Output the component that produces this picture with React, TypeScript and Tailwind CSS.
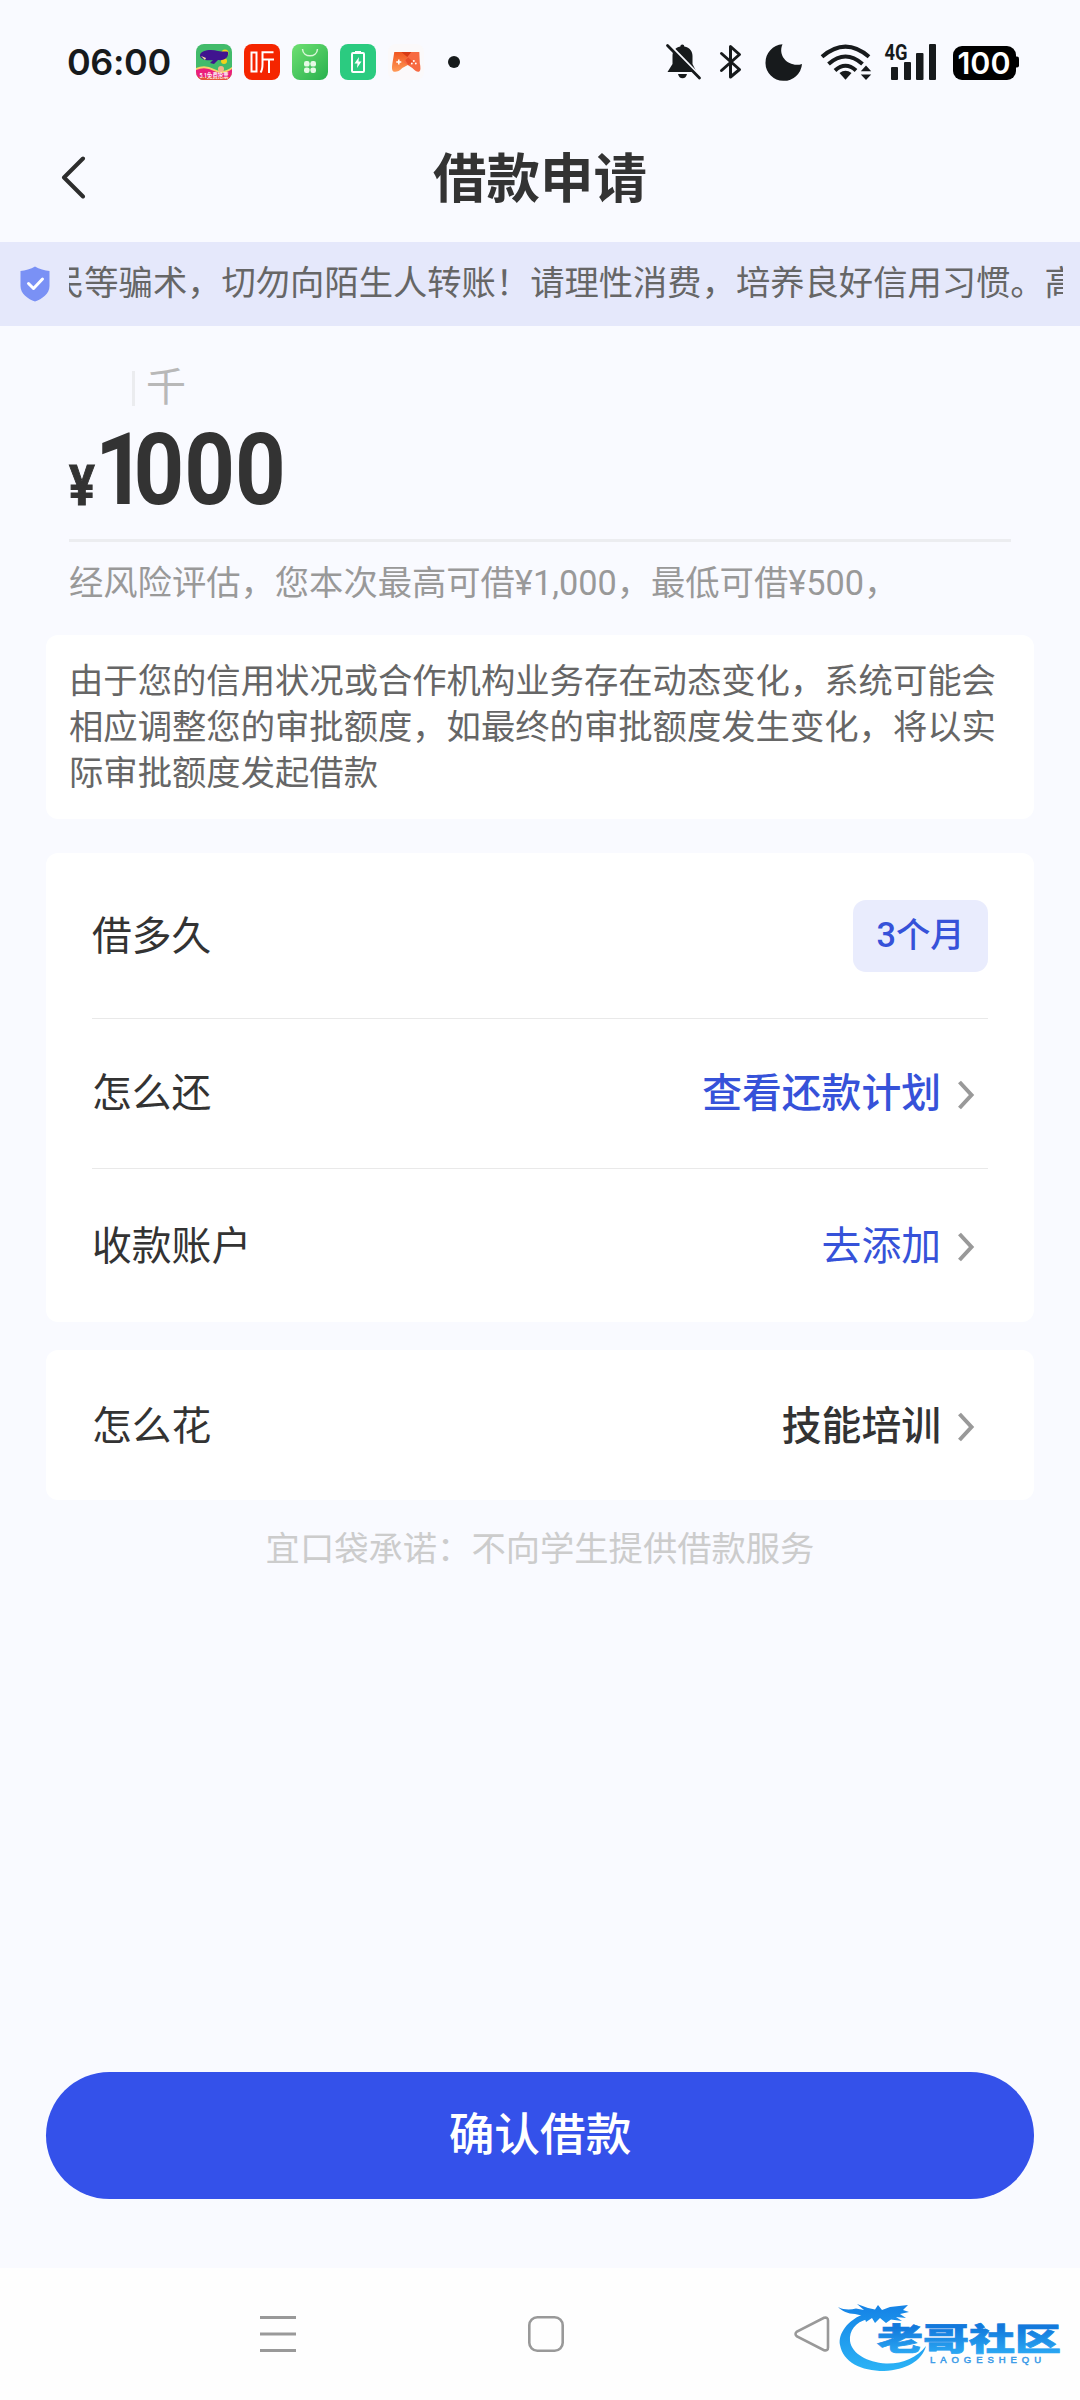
import React from 'react';

type LoanRow = {
  label: string;
  value: string;
  valueClass: string;
};

const PLAN_ROW: LoanRow = { label: '怎么还', value: '查看还款计划', valueClass: 'font-medium text-[#3652d9]' };
const ACCOUNT_ROW: LoanRow = { label: '收款账户', value: '去添加', valueClass: 'text-[#3652d9]' };
const USAGE_ROW: LoanRow = { label: '怎么花', value: '技能培训', valueClass: 'font-medium text-[#333333]' };

// --- Status bar ---
const AppIcons: React.FC = () => (
  <svg className="ml-[26px] h-9 w-[264px]" viewBox="0 0 264 36">
    <defs>
      <linearGradient id="market" x1="0" y1="0" x2="1" y2="1">
        <stop offset="0" stopColor="#6fe072" />
        <stop offset="1" stopColor="#27b04d" />
      </linearGradient>
      <linearGradient id="padLeft" x1="0" y1="0" x2="0" y2="1">
        <stop offset="0" stopColor="#f0551f" />
        <stop offset="1" stopColor="#ff9a56" />
      </linearGradient>
      <clipPath id="whaleClip">
        <rect width="36" height="36" rx="8" />
      </clipPath>
    </defs>
    <g clipPath="url(#whaleClip)">
      <rect width="36" height="36" fill="#42bb6b" />
      <path d="M0 24 Q9 20 18 25 T36 23 V36 H0Z" fill="#f7d36b" />
      <path d="M0 26 Q9 22 18 27 T36 25 V36 H0Z" fill="#ea1f7c" />
      <rect y="33" width="36" height="3" fill="#e8553a" />
      <circle cx="29" cy="9" r="3.5" fill="#f3d21b" />
      <circle cx="28" cy="17" r="3" fill="#f3d21b" />
      <circle cx="25" cy="25" r="3" fill="#f5b58a" />
      <path d="M4 11 C5 6 15 5 22 7 C27 8 31 7 32 8 C33 13 29 17 22 16 L18 20 L14 19 L17 16 C9 17 4 15 4 11Z" fill="#40148f" />
      <path d="M5 12 l5 2 -1 2Z" fill="#f6e6a0" />
      <text x="3.5" y="33.5" fontSize="7.2" fontWeight="500" fill="#fff" textLength="29" lengthAdjust="spacingAndGlyphs">5.1免费抢票</text>
    </g>
    <rect x="48" width="36" height="36" rx="8" fill="#f52500" />
    <g fill="none" stroke="#fff" strokeWidth="2">
      <path d="M55.500 8.500 H60.500 V27.500 H55.500Z" />
      <path d="M77.500 8.200 L66.500 8.200 V20 Q66.500 26 64.500 28.500" />
      <path d="M66.500 15.500 H78 M73 15.500 V29" />
    </g>
    <rect x="96" width="36" height="36" rx="8" fill="url(#market)" />
    <path d="M106.500 5 C107 14 121 14 121.500 5" fill="none" stroke="#d9f7d8" strokeWidth="1.500" />
    <g fill="#e6f9e6">
      <rect x="108" y="17" width="5.600" height="5.600" rx="2.200" />
      <rect x="114.400" y="17" width="5.600" height="5.600" rx="2.200" />
      <rect x="108" y="23.400" width="5.600" height="5.600" rx="2.200" />
      <rect x="114.400" y="23.400" width="5.600" height="5.600" rx="2.200" />
    </g>
    <rect x="144" width="36" height="36" rx="8" fill="#2bcb80" />
    <rect x="156" y="9" width="12" height="19" rx="1" fill="none" stroke="#fff" strokeWidth="2" />
    <rect x="159" y="7" width="6" height="2.500" fill="#fff" />
    <path d="M163 13 L158.500 19.500 H161.500 L161 24 L165.500 17.500 H162.500Z" fill="#fff" />
    <rect x="192" width="36" height="36" rx="8" fill="#fbf9fa" />
    <g transform="translate(1.300 0)">
      <path d="M199 8 H218 L211 15 Z" fill="#d83a14" />
      <path d="M197 8 H204 L216 18 L205 24 Q200 29 196 27.500 Q194 26 195 20Z" fill="url(#padLeft)" />
      <path d="M222 8 H214 L206 18 L215 24 Q219 28.500 222 27.500 Q224 26 222.500 19Z" fill="#f76a42" />
      <path d="M208 16 L211 13.500 L216 18 L211 21Z" fill="#e9502a" />
      <path d="M199 18 H204 M201.500 15.500 V20.500" stroke="#fff" strokeWidth="1.500" />
      <circle cx="216.500" cy="17" r="1" fill="#fff" />
      <circle cx="214.500" cy="19.500" r="0.900" fill="#fff" />
      <circle cx="218.500" cy="19.500" r="0.900" fill="#fff" />
    </g>
    <circle cx="258" cy="18" r="6" fill="#171a1c" />
  </svg>
);

const SystemIcons: React.FC = () => (
  <svg className="h-10 w-[360px] overflow-visible" viewBox="0 0 360 40" fill="#171a1c">
    {/* muted bell */}
    <path d="M20.300 4.500 a2 2 0 0 1 4 0 C30 5.500 32.500 9.500 32.500 14 V22 L36.500 30 H7.500 L12.500 22 V14 C12.500 9.500 15 5.500 20.300 4.500Z" />
    <path d="M18 32 H27 Q26 36.200 22.500 36.200 Q19 36.200 18 32Z" />
    <path d="M9.500 3 L42 36.500" stroke="#f9faff" strokeWidth="3.200" />
    <path d="M7.500 3.500 L39.500 36" stroke="#171a1c" strokeWidth="2.800" strokeLinecap="round" />
    {/* bluetooth */}
    <path d="M61.500 11.500 L79.500 27.500 L70.500 35 V4.500 L79.500 12.500 L61.500 28.500" fill="none" stroke="#171a1c" strokeWidth="3" strokeLinejoin="round" strokeLinecap="round" />
    {/* do not disturb */}
    <path d="M122.500 2.300 A18.300 18.300 0 1 0 142 22 C130 26 117 15 122.500 2.300Z" />
    {/* wifi */}
    <g fill="none" stroke="#171a1c" strokeWidth="4">
      <path d="M162 14.800 Q185.500 -5.500 209 14.800" />
      <path d="M168.500 22 Q185.500 7 202.500 22" />
      <path d="M175 28.500 Q185.500 19 196 28.500" />
    </g>
    <path d="M179.500 31 Q185.500 26.500 191.500 31 L185.500 37.800Z" />
    <path d="M206 23.500 L211.200 29.300 H200.800Z M206 38 L211.200 32.600 H200.800Z" />
    {/* signal */}
    <text x="224.500" y="17.500" fontFamily="Roboto" fontWeight="700" fontSize="21.500" textLength="23" lengthAdjust="spacingAndGlyphs">4G</text>
    <rect x="231" y="25" width="7" height="13" rx="1" />
    <rect x="244" y="20" width="7" height="18" rx="1" />
    <rect x="256" y="11" width="7.500" height="27" rx="1" />
    <rect x="269" y="2" width="7" height="36" rx="1" />
    {/* battery */}
    <rect x="293" y="4" width="63" height="34" rx="9" fill="#000" />
    <path d="M355 14.500 h2 q2 0 2 2 v7 q0 2 -2 2 h-2Z" fill="#000" />
    <text x="297.500" y="32.200" fontFamily="Inter" fontWeight="600" fontSize="30.500" fill="#fff" textLength="53" lengthAdjust="spacingAndGlyphs">100</text>
  </svg>
);

const StatusBar: React.FC = () => (
  <div className="flex h-[124px] shrink-0 items-center justify-between pl-[67px] pr-[60px]">
    <div className="flex items-center">
      <span className="w-[103px] whitespace-nowrap font-[Inter] text-[36px] font-semibold tracking-[-0.4px] text-[#171a1c]">06:00</span>
      <AppIcons />
    </div>
    <SystemIcons />
  </div>
);

// --- Shared pieces ---
const Chevron: React.FC = () => (
  <svg className="ml-[16px] mr-[13px] mt-[1px] h-[30px] w-[18px]" viewBox="0 0 18 30" fill="none" stroke="#999999" strokeWidth="4">
    <path d="M2.500 2 L14.500 15 L2.500 28" />
  </svg>
);

const Row: React.FC<{ row: LoanRow; className: string }> = ({ row, className }) => (
  <div className={`flex items-center justify-between ${className}`}>
    <span className="text-[#333333]">{row.label}</span>
    <button className="flex items-center">
      <span className={row.valueClass}>{row.value}</span>
      <Chevron />
    </button>
  </div>
);

const Watermark: React.FC = () => (
  <svg className="absolute left-[834px] top-[28px] h-[84px] w-[236px]" viewBox="0 0 236 84">
    <defs>
      <linearGradient id="water" gradientUnits="userSpaceOnUse" x1="0" y1="10" x2="0" y2="76">
        <stop offset="0" stopColor="#1583e6" />
        <stop offset="1" stopColor="#2bb4f6" />
      </linearGradient>
      <linearGradient id="waterText" gradientUnits="userSpaceOnUse" x1="0" y1="30" x2="0" y2="58">
        <stop offset="0" stopColor="#1279dc" />
        <stop offset="1" stopColor="#2aa6f2" />
      </linearGradient>
    </defs>
    <path d="M32 17 C13 24 4 38 6 49 C9 66 27 75 50 75 C72 74 88 65 92 50 C83 62 68 68 52 67.500 C33 66 18 58 16 45 C15 35 21 26 34 23Z" fill="url(#water)" />
    <path d="M4 11 C10 14 16 14 22 12.500 L30 14 L23 8 L34 12 L41 13.500 L44 9 L48 14 L56 11 L74 9 L69 14 L75 16 L66 18 L72 22 L62 21 L68 25 L57 23.500 L52 27 L46 22 L41 27 L38 22 L32 26 L30 20 L21 18 C14 18 8 15 4 11Z" fill="url(#water)" />
    <text x="43" y="55.500" fontFamily="'Noto Sans CJK SC'" fontWeight="900" fontSize="34" fill="url(#waterText)" stroke="url(#waterText)" strokeWidth="0.800" textLength="184" lengthAdjust="spacingAndGlyphs" transform="translate(0 4.500) scale(1 0.900)">老哥社区</text>
    <text x="96" y="67" fontFamily="'Liberation Sans'" fontSize="9.500" fill="#3b9be8" stroke="#3b9be8" strokeWidth="0.500" textLength="111">LAOGESHEQU</text>
  </svg>
);

const App: React.FC = () => {
  return (
    <div className="flex h-[2400px] w-[1080px] flex-col overflow-hidden bg-[#f9faff] font-[Roboto,'Noto_Sans_CJK_SC',sans-serif]">
      <StatusBar />

      <header className="grid h-[118px] shrink-0 grid-cols-[108px_1fr_108px] items-center">
        <button className="pb-[12px] pl-[60px]">
          <svg className="h-[44px] w-[28px]" viewBox="0 0 28 44" fill="none" stroke="#2d2d2d" strokeWidth="4" strokeLinecap="round" strokeLinejoin="round">
            <path d="M23 3.500 L4 22.500 L23 41.500" />
          </svg>
        </button>
        <h1 className="pb-[6px] text-center text-[53.500px] font-bold leading-[60px] text-[#333333]">借款申请</h1>
      </header>

      <div className="flex h-[84px] shrink-0 items-center bg-[#e5e8fb] pl-[19px] pr-[17px]">
        <svg className="h-[36px] w-[32px] shrink-0" viewBox="0 0 32 36">
          <path d="M16 0.500 C20 3 26 4.500 30.500 5 V20 C30.500 28 23 33 16 35.500 C9 33 1.500 28 1.500 20 V5 C6 4.500 12 3 16 0.500Z" fill="#7a91f5" />
          <path d="M9.500 17.500 L14.500 22.500 L23.500 13" fill="none" stroke="#fff" strokeWidth="3" strokeLinecap="round" strokeLinejoin="round" />
        </svg>
        <div className="ml-[18px] flex-1 overflow-hidden pb-[2px]">
          <p className="ml-[-19px] whitespace-nowrap text-[34.300px] leading-[50px] text-[#666666]">
            民等骗术，切勿向陌生人转账！请理性消费，培养良好信用习惯。高
          </p>
        </div>
      </div>

      <section className="mx-[69px] shrink-0">
        <div className="flex h-[104px] items-center pl-[63px] pt-[20px]">
          <div className="h-[35px] w-[3px] bg-[#ebecef]" />
          <span className="ml-[11px] text-[40px] leading-[40px] text-[#b8b8b8]">千</span>
        </div>
        <div className="flex h-[112px] items-end border-b-[3px] border-[#ecedf0] text-[#333333]">
          <span className="mb-[20px] w-[26px] origin-left scale-x-[0.86] text-[56px] font-bold leading-[66px] [-webkit-text-stroke:1px_#333333]">¥</span>
          <span className="mb-[19px] origin-left scale-x-[0.885] text-[100px] font-bold leading-[100px]">
            <span className="tracking-[-14px]">1</span>000
          </span>
        </div>
        <p className="mt-[16px] whitespace-nowrap text-[34.300px] leading-[50px] text-[#999999]">
          经风险评估，您本次最高可借¥1,000，最低可借¥500，
        </p>
      </section>

      <section className="mx-[46px] mt-[27px] h-[184px] shrink-0 rounded-[12px] bg-white px-[23px] pt-[23px]">
        <p className="w-[930px] break-all text-[34.340px] leading-[46px] text-[#666666]">
          由于您的信用状况或合作机构业务存在动态变化，系统可能会相应调整您的审批额度，如最终的审批额度发生变化，将以实际审批额度发起借款
        </p>
      </section>

      <section className="mx-[46px] mt-[34px] h-[469px] shrink-0 rounded-[12px] bg-white px-[46px] text-[39.800px]">
        <div className="flex h-[166px] items-center justify-between border-b border-[#e9e9e9]">
          <span className="pt-[2px] text-[#333333]">借多久</span>
          <span className="flex h-[72px] w-[135px] items-center justify-center rounded-[13px] bg-[#e9ecfd] text-[34.300px] font-medium text-[#3652d9]">3个月</span>
        </div>
        <Row row={PLAN_ROW} className="h-[150px] border-b border-[#e9e9e9] pt-[1px]" />
        <Row row={ACCOUNT_ROW} className="h-[153px] pt-[2px]" />
      </section>

      <section className="mx-[46px] mt-[28px] h-[150px] shrink-0 rounded-[12px] bg-white px-[46px] text-[39.800px]">
        <Row row={USAGE_ROW} className="h-[150px] pt-[3px]" />
      </section>

      <p className="mt-[24px] text-center text-[34.300px] leading-[50px] text-[#cccccc]">宜口袋承诺：不向学生提供借款服务</p>

      <div className="mx-[46px] mb-[69px] mt-auto">
        <button className="h-[127px] w-full rounded-full bg-[#3451ea] pt-[2px] text-[45.700px] font-medium text-white">确认借款</button>
      </div>

      <nav className="relative h-[132px] shrink-0 bg-[#fefefe]">
        <div className="flex items-start pl-[259px] pt-[47px]">
          <svg className="h-[38px] w-[38px]" viewBox="0 0 38 38" stroke="#999999" strokeWidth="3">
            <path d="M1 2.500 H37 M1 19 H37 M1 35.500 H37" />
          </svg>
          <svg className="ml-[230px] h-[38px] w-[38px]" viewBox="0 0 38 38" fill="none" stroke="#999999" strokeWidth="2.6">
            <rect x="2.300" y="2.300" width="33.400" height="33.400" rx="8" />
          </svg>
          <svg className="ml-[228px] h-[38px] w-[38px]" viewBox="0 0 38 38" fill="none" stroke="#999999" strokeWidth="2.6">
            <path d="M31 2.800 Q35 1.800 35 5.500 V32.500 Q35 36.200 31 35.200 L4 21.500 Q1 19 4 16.500Z" />
          </svg>
        </div>
        <Watermark />
      </nav>
    </div>
  );
};

export default App;
